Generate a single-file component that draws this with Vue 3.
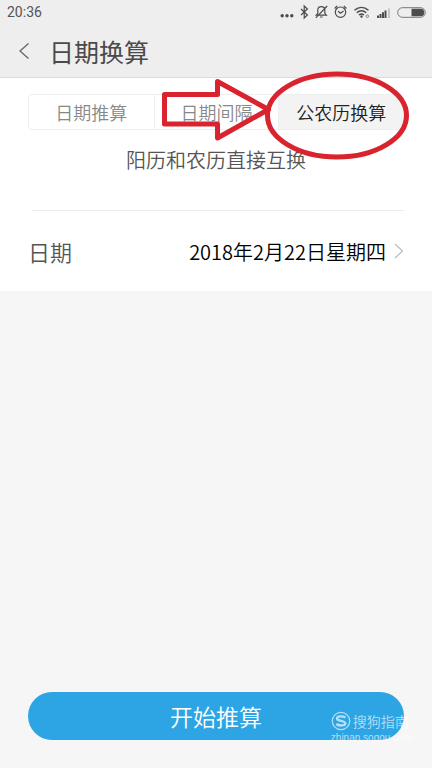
<script setup>
import { ref } from 'vue'

const tabs = ['日期推算', '日期间隔', '公农历换算']
const active = ref(2)
</script>

<template>
  <div class="screen">
    <header class="top">
      <div class="status">
        <time>20:36</time>
        <svg class="status-icons" width="148" height="16" viewBox="280 4 148 16" fill="none" stroke="#4c4c4c" aria-hidden="true">
          <g fill="#4c4c4c" stroke="none">
            <circle cx="282.200" cy="15.700" r="1.700" />
            <circle cx="287" cy="15.700" r="1.700" />
            <circle cx="291.800" cy="15.700" r="1.700" />
          </g>
          <path d="M301 9l6.400 6-3.200 3V6l3.200 3-6.400 6" stroke-width="1.200" />
          <path d="M316.200 15.200h10.200l-1.600-1.900v-3.300c0-2-1.500-3.400-3.500-3.400s-3.500 1.400-3.500 3.400v3.300zM320 17h2.600M327.200 6l-11.400 11.800" stroke-width="1.200" />
          <circle cx="340.500" cy="12.200" r="5.200" stroke-width="1.200" />
          <path d="M338 11.200l2.500 2 3-2.200M334.600 8.400l2.600-2.300M343.800 6.100l2.600 2.300" stroke-width="1.300" />
          <path d="M354.500 10.300c4.300-3.800 9.700-3.800 14 0M356.800 12.700c2.800-2.500 6.600-2.500 9.400 0M359 15c1.500-1.300 3.500-1.300 5 0" stroke-width="1.500" />
          <circle cx="361.500" cy="16.500" r="1.200" fill="#4c4c4c" stroke="none" />
          <circle cx="367.300" cy="16.200" r="1.300" stroke="#888" />
          <path d="M378 15.500v2.500M380.500 14v4M383 12.300v5.700M385.500 10.600v7.400" stroke-width="2" />
          <path d="M389 8.600v9.400" stroke="#bbb" stroke-width="1.600" />
          <rect x="397.700" y="7.700" width="27.600" height="9.600" rx="4.800" stroke="#777" />
          <path d="M411.500 8.700h9a3.800 3.800 0 0 1 0 7.600h-9z" fill="#4c4c4c" stroke="none" />
        </svg>
      </div>
      <div class="nav">
        <button class="back" type="button" aria-label="返回">
          <svg width="12" height="18" viewBox="0 0 12 18" fill="none" stroke="#666" stroke-width="1.300"><path d="M10.500 1.500L2 9l8.500 7.500" /></svg>
        </button>
        <h1>日期换算</h1>
      </div>
    </header>

    <main class="panel">
      <div class="tabs">
        <button
          v-for="(tab, i) in tabs"
          :key="tab"
          type="button"
          class="tab"
          :class="{ active: active === i }"
          :aria-pressed="active === i"
          @click="active = i"
        >{{ tab }}</button>
      </div>
      <p class="hint">阳历和农历直接互换</p>
      <hr class="divider">
      <button class="row" type="button">
        <span class="label">日期</span>
        <span class="value">2018年2月22日星期四</span>
        <svg width="10" height="16" viewBox="0 0 10 16" fill="none" stroke="#bbb" stroke-width="1.200"><path d="M1 1l7.500 7L1 15" /></svg>
      </button>
      <svg class="marks" viewBox="0 0 432 90" fill="none" stroke="#d9232e" stroke-width="5" stroke-linejoin="round" aria-hidden="true">
        <path d="M164.500 16.500H217.500V3.500l51 28-51 28.500V46h-53z" />
        <ellipse cx="337" cy="37.500" rx="69.500" ry="41.500" />
      </svg>
    </main>

    <footer class="bottom">
      <button class="start" type="button">开始推算</button>
      <div class="watermark">
        <div class="brand">
          <svg width="20" height="20" viewBox="0 0 20 20" fill="none" stroke="currentColor"><circle cx="10" cy="10" r="8.700" stroke-width="1.200" /><path d="M14.500 6.500C12 5 6 4.800 6 7.500c0 3 8.300 1.800 8.300 4.800 0 2.800-6 2.600-9 .8" stroke-width="2.400" /></svg>
          <span>搜狗指南</span>
        </div>
        <span class="site">zhinan.sogou.com</span>
      </div>
    </footer>
  </div>
</template>

<style>
body {
  background: #f6f6f6;
}
</style>

<style scoped>
.screen {
  display: flex;
  flex-direction: column;
  min-height: 100vh;
  font-family: "Noto Sans CJK SC", sans-serif;
  font-weight: 350;
  background: #f6f6f6;
}
button {
  margin: 0;
  padding: 0;
  border: 0;
  background: none;
  font: inherit;
}
svg {
  display: block;
}
.top {
  background: #eee;
  border-bottom: 1px solid #dcdcdc;
}
.status {
  display: flex;
  align-items: center;
  justify-content: space-between;
  height: 24px;
  padding: 0 4px 0 7px;
  font-family: Roboto, sans-serif;
  font-weight: 400;
  font-size: 14px;
  color: #555;
}
.nav {
  display: flex;
  align-items: center;
  gap: 19px;
  height: 53px;
  padding-left: 18px;
}
h1 {
  margin: 0;
  font-size: 25px;
  line-height: 36px;
  font-weight: 400;
  color: #4a4a4a;
}
.panel {
  position: relative;
  padding: 16px 28px 0;
  background: #fff;
}
.tabs {
  display: grid;
  grid-template-columns: repeat(3, 1fr);
  border: 1px solid #eee;
  border-radius: 4px;
  overflow: hidden;
}
.tab {
  height: 34px;
  font-size: 18px;
  line-height: 34px;
  color: #888;
}
.tab + .tab {
  border-left: 1px solid #eee;
}
.tab.active {
  background: #f3f3f3;
  color: #222;
}
.hint {
  margin: 15px 0 35px;
  font-size: 20px;
  line-height: 30px;
  text-align: center;
  color: #555;
}
.divider {
  height: 1px;
  margin: 0 0 0 4px;
  border: 0;
  background: #ebebeb;
}
.row {
  display: flex;
  align-items: center;
  width: 100%;
  height: 80px;
}
.label {
  margin-right: auto;
  font-size: 22px;
  color: #555;
}
.value {
  margin-right: 8px;
  font-size: 20px;
  color: #000;
}
.marks {
  position: absolute;
  top: 0;
  left: 0;
  width: 100%;
  overflow: visible;
  pointer-events: none;
}
.bottom {
  position: relative;
  margin-top: auto;
  padding: 0 28px 28px;
}
.start {
  display: block;
  width: 100%;
  height: 48px;
  border-radius: 24px;
  background: #2da5e4;
  font-size: 23px;
  line-height: 48px;
  color: #fff;
}
.watermark {
  position: absolute;
  top: 19px;
  right: 20px;
  color: rgba(255, 255, 255, 0.65);
  pointer-events: none;
}
.brand {
  display: flex;
  align-items: center;
  gap: 2px;
  font-size: 14px;
  line-height: 20px;
}
.site {
  display: block;
  font-family: "Liberation Sans", sans-serif;
  font-size: 10px;
  line-height: 14px;
}
</style>
